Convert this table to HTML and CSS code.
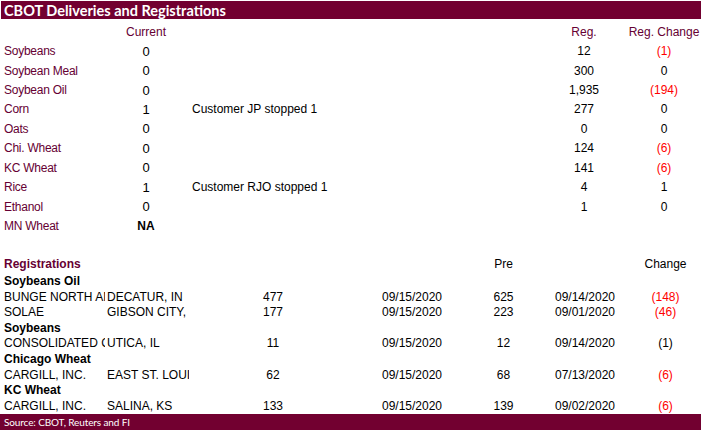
FILE: index.html
```html
<!DOCTYPE html>
<html>
<head>
<meta charset="utf-8">
<link rel="stylesheet" href="styles.css">
</head>
<body>
<div class="sheet">
  <div class="titlebar">CBOT Deliveries and Registrations</div>
  <div class="deliv">
    <div></div><div class="c lbl">Current</div><div></div><div class="c lbl">Reg.</div><div class="c lbl rc">Reg. Change</div>
    <div class="lbl pl">Soybeans</div><div class="c big">0</div><div></div><div class="c">12</div><div class="c neg rc">(1)</div>
    <div class="lbl pl">Soybean Meal</div><div class="c big">0</div><div></div><div class="c">300</div><div class="c rc">0</div>
    <div class="lbl pl">Soybean Oil</div><div class="c big">0</div><div></div><div class="c">1,935</div><div class="c neg rc">(194)</div>
    <div class="lbl pl">Corn</div><div class="c big">1</div><div class="note">Customer JP stopped 1</div><div class="c">277</div><div class="c rc">0</div>
    <div class="lbl pl">Oats</div><div class="c big">0</div><div></div><div class="c">0</div><div class="c rc">0</div>
    <div class="lbl pl">Chi. Wheat</div><div class="c big">0</div><div></div><div class="c">124</div><div class="c neg rc">(6)</div>
    <div class="lbl pl">KC Wheat</div><div class="c big">0</div><div></div><div class="c">141</div><div class="c neg rc">(6)</div>
    <div class="lbl pl">Rice</div><div class="c big">1</div><div class="note">Customer RJO stopped 1</div><div class="c">4</div><div class="c rc">1</div>
    <div class="lbl pl">Ethanol</div><div class="c big">0</div><div></div><div class="c">1</div><div class="c rc">0</div>
    <div class="lbl pl">MN Wheat</div><div class="c b">NA</div><div></div><div></div><div></div>
  </div>
  <div class="regs">
    <div class="lbl b pl">Registrations</div><div></div><div></div><div></div><div class="c">Pre</div><div></div><div class="c">Change</div>
    <div class="b pl span">Soybeans Oil</div>
    <div class="pl clip">BUNGE NORTH AMERICA</div><div class="clip loc">DECATUR, IN</div><div class="c">477</div><div class="c">09/15/2020</div><div class="c">625</div><div class="c">09/14/2020</div><div class="c neg">(148)</div>
    <div class="pl clip">SOLAE</div><div class="clip loc">GIBSON CITY, IL</div><div class="c">177</div><div class="c">09/15/2020</div><div class="c">223</div><div class="c">09/01/2020</div><div class="c neg">(46)</div>
    <div class="b pl span">Soybeans</div>
    <div class="pl clip">CONSOLIDATED GRAIN</div><div class="clip loc">UTICA, IL</div><div class="c">11</div><div class="c">09/15/2020</div><div class="c">12</div><div class="c">09/14/2020</div><div class="c">(1)</div>
    <div class="b pl span">Chicago Wheat</div>
    <div class="pl clip">CARGILL, INC.</div><div class="clip loc">EAST ST. LOUIS, IL</div><div class="c">62</div><div class="c">09/15/2020</div><div class="c">68</div><div class="c">07/13/2020</div><div class="c neg">(6)</div>
    <div class="b pl span">KC Wheat</div>
    <div class="pl clip">CARGILL, INC.</div><div class="clip loc">SALINA, KS</div><div class="c">133</div><div class="c">09/15/2020</div><div class="c">139</div><div class="c">09/02/2020</div><div class="c neg">(6)</div>
  </div>
  <div class="footer">Source: CBOT, Reuters and FI</div>
</div>
</body>
</html>
```

FILE: styles.css
```css
html, body {
  margin: 0;
  padding: 0;
  background: #fff;
}
.sheet {
  width: 701px;
  height: 430px;
  display: flex;
  flex-direction: column;
  font-family: "Liberation Sans", Arial, sans-serif;
  font-size: 12px;
  color: #000;
  overflow: hidden;
}
.titlebar {
  margin: 1px 0 0 1px;
  height: 18px;
  background: #720030;
  color: #fff;
  font-family: Lato, "Open Sans", sans-serif;
  font-weight: 700;
  font-size: 14.5px;
  line-height: 19px;
  padding-left: 3px;
}
.deliv {
  margin-top: 3px;
  display: grid;
  grid-template-columns: 118px 56px 380px 60px 87px;
  grid-auto-rows: 19.45px;
}
.regs {
  margin-top: 19.35px;
  display: grid;
  grid-template-columns: 105px 84px 168px 110px 73px 90px 71px;
  grid-template-rows: 18px repeat(9, 15.6px);
}
.deliv > div, .regs > div {
  display: flex;
  align-items: center;
  white-space: nowrap;
  min-width: 0;
}
.c { justify-content: center; }
.rc { padding-left: 16px; padding-right: 3px; }
.pl { padding-left: 4px; }
.lbl { color: #660033; }
.deliv .lbl.pl { letter-spacing: -0.25px; }
.b { font-weight: 700; }
.big { font-size: 13px; }
.neg { color: #ff0000; }
.note { padding-left: 18px; }
.span { grid-column: 1 / -1; }
.clip { overflow: hidden; }
.loc { padding-left: 2px; }
.footer {
  flex: 1;
  background: #720030;
  color: #fff;
  font-family: Lato, "Open Sans", sans-serif;
  font-size: 10px;
  letter-spacing: -0.12px;
  padding-left: 4px;
  display: flex;
  align-items: center;
}
```
